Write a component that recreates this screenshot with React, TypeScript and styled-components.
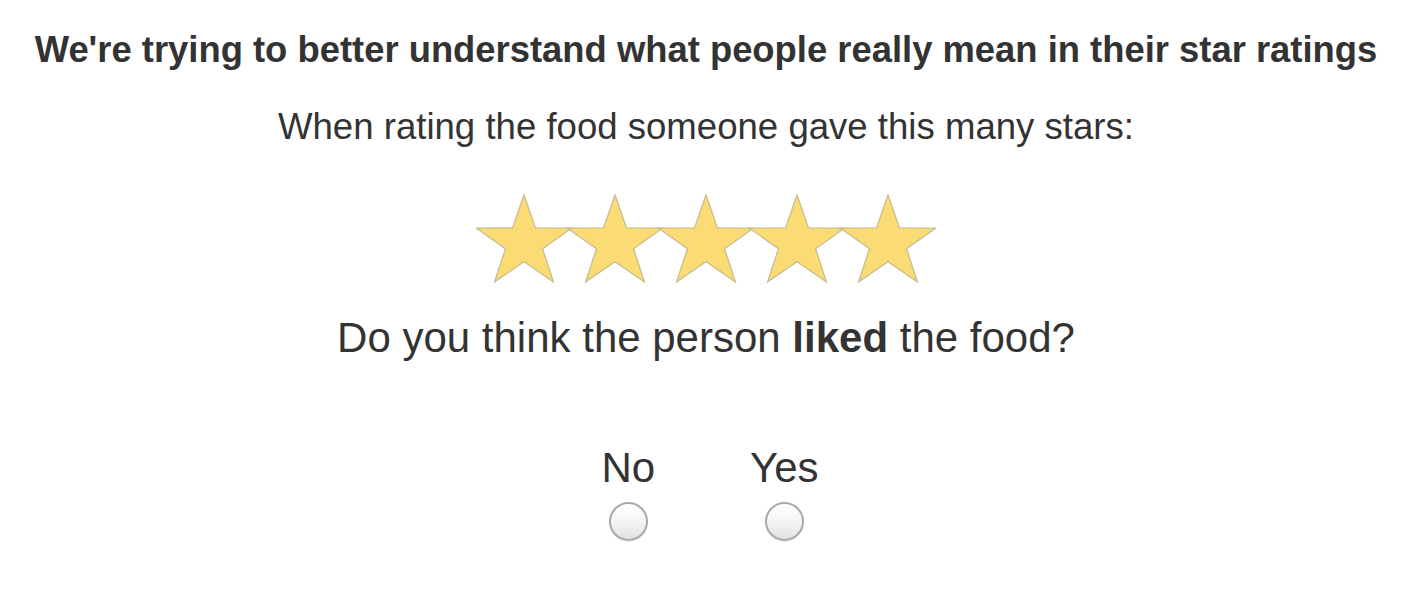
import React, { useState } from "react";
import styled, { createGlobalStyle } from "styled-components";

const GlobalStyle = createGlobalStyle`
  html, body {
    margin: 0;
    padding: 0;
    background: #ffffff;
  }
  body {
    font-family: "Liberation Sans", Arial, Helvetica, sans-serif;
    color: #333333;
  }
`;

const Page = styled.div`
  width: 1424px;
  height: 610px;
  display: flex;
  flex-direction: column;
  align-items: center;
  padding: 30px 12px 0 0;
  box-sizing: border-box;
`;

const Title = styled.h1`
  margin: 0;
  font-size: 36.4px;
  font-weight: bold;
  line-height: 40px;
  white-space: nowrap;
`;

const Prompt = styled.p`
  margin: 37px 0 0;
  font-size: 36.6px;
  line-height: 40px;
  white-space: nowrap;
`;

const Stars = styled.div`
  margin-top: 47px;
  height: 90px;
  display: flex;
`;

const Question = styled.p`
  margin: 30px 0 0;
  font-size: 42px;
  line-height: 48px;
  white-space: nowrap;
`;

const Options = styled.div`
  margin: 82px 0 0 8px;
  display: flex;
  gap: 95px;
`;

const Option = styled.label`
  display: flex;
  flex-direction: column;
  align-items: center;
  gap: 10px;
  font-size: 42px;
  line-height: 48px;
  cursor: pointer;
`;

const Radio = styled.span<{ $checked: boolean }>`
  width: 39px;
  height: 39px;
  border-radius: 50%;
  border: 2px solid #aaaaaa;
  box-sizing: border-box;
  background: ${(p) =>
    p.$checked
      ? "radial-gradient(circle, #3a7bd5 0 7px, #eeeeee 8px)"
      : "linear-gradient(#ffffff 0%, #f6f6f6 45%, #e2e2e2 100%)"};
  box-shadow: 0 1px 1px rgba(0, 0, 0, 0.08);
`;

function starPoints(cx: number, cy: number, rx: number, ry: number, ratio: number) {
  const pts: string[] = [];
  for (let i = 0; i < 10; i++) {
    const k = i % 2 === 0 ? 1 : ratio;
    const a = (Math.PI / 5) * i - Math.PI / 2;
    pts.push(`${(cx + rx * k * Math.cos(a)).toFixed(2)},${(cy + ry * k * Math.sin(a)).toFixed(2)}`);
  }
  return pts.join(" ");
}

function StarRow({ count }: { count: number }) {
  const step = 91;
  const w = step * (count - 1) + 96;
  return (
    <svg width={w} height={90} viewBox={`0 0 ${w} 90`}>
      {Array.from({ length: count }).map((_, i) => (
        <polygon
          key={i}
          points={starPoints(48 + i * step, 49, 50, 48, 0.39)}
          fill="#fbdc74"
          stroke="#c8bd8e"
          strokeWidth={1.3}
        />
      ))}
    </svg>
  );
}

export default function App() {
  const [answer, setAnswer] = useState<string>("");
  return (
    <>
      <GlobalStyle />
      <Page>
        <Title>We're trying to better understand what people really mean in their star ratings</Title>
        <Prompt>When rating the food someone gave this many stars:</Prompt>
        <Stars>
          <StarRow count={5} />
        </Stars>
        <Question>
          Do you think the person <b>liked</b> the food?
        </Question>
        <Options>
          {["No", "Yes"].map((o) => (
            <Option key={o} onClick={() => setAnswer(o)}>
              {o}
              <Radio $checked={answer === o} />
            </Option>
          ))}
        </Options>
      </Page>
    </>
  );
}
